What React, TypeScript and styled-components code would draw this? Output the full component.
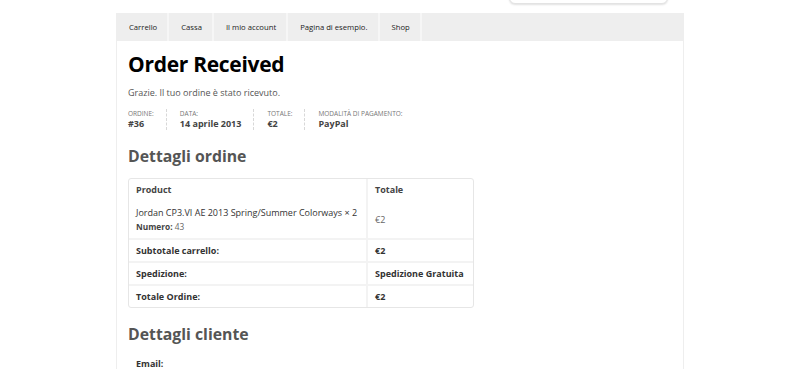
import React from 'react';
import styled, { createGlobalStyle } from 'styled-components';

const GlobalStyle = createGlobalStyle`
  html, body {
    margin: 0;
    padding: 0;
    background: #fff;
    font-family: "Open Sans", "Liberation Sans", sans-serif;
    color: #333;
  }
`

const Page = styled.div`
  width: 800px;
  height: 369px;
  overflow: hidden;
  background: #fff;
`

const TopBar = styled.div`
  height: 13px;
  display: flex;
  justify-content: flex-end;
  padding-right: 132px;
`

const Search = styled.div`
  width: 157px;
  height: 28px;
  margin-top: -26px;
  border: 1px solid #e3e3e3;
  border-radius: 6px;
  box-shadow: 0 1px 2px rgba(0, 0, 0, 0.12);
  background: #fff;
`

const Container = styled.div`
  width: 566px;
  margin-left: 116px;
  border-left: 1px solid #eee;
  border-right: 1px solid #eee;
  min-height: 400px;
`

const Nav = styled.ul`
  display: flex;
  list-style: none;
  margin: 0;
  padding: 0;
  height: 28px;
  background: #eee;
`

const NavItem = styled.li`
  display: flex;
  align-items: center;
  padding: 0 10px 0 12px;
  font-size: 7.7px;
  color: #222;
  border-right: 2px solid #f6f6f6;
`

const Content = styled.div`
  padding: 8px 11px 0 11px;
`

const Title = styled.h1`
  margin: 0;
  font-size: 21px;
  font-weight: 700;
  color: #000;
  letter-spacing: -0.3px;
  line-height: 30px;
`

const Thanks = styled.p`
  margin: 8px 0 0;
  font-size: 9px;
  line-height: 12px;
  color: #555;
`

const Overview = styled.ul`
  display: flex;
  list-style: none;
  margin: 10px 0 0;
  padding: 0;
`

const OverviewItem = styled.li`
  display: flex;
  flex-direction: column;
  padding-right: 12px;
  margin-right: 13px;
  border-right: 1px dashed #d8d8d8;

  &:last-child {
    border-right: none;
  }

  .label {
    font-size: 6.5px;
    text-transform: uppercase;
    color: #777;
    line-height: 9px;
  }

  .value {
    font-size: 9px;
    font-weight: 700;
    color: #444;
    line-height: 12px;
  }
`

const SectionTitle = styled.h2<{ top: number }>`
  margin: ${(p) => p.top}px 0 0;
  font-size: 15.8px;
  font-weight: 700;
  color: #555;
  line-height: 22px;
`

const Table = styled.table`
  margin-top: 11px;
  width: 346px;
  border-collapse: separate;
  border-spacing: 0;
  border: 1px solid #e6e6e6;
  border-radius: 3px;
  font-size: 9px;
  color: #333;
`

const Cell = styled.td<{ head?: boolean; bold?: boolean; wide?: boolean }>`
  padding: 0 7px;
  height: ${(p) => (p.wide ? '38px' : '21px')};
  font-weight: ${(p) => (p.bold ? 700 : 400)};
  color: ${(p) => (p.head ? '#444' : '#333')};
  text-align: left;
  border-bottom: 2px solid #f3f3f3;
  vertical-align: middle;
  white-space: nowrap;

  &:first-child {
    width: 223px;
    border-right: 2px solid #f3f3f3;
  }

  tr:last-child & {
    border-bottom: none;
  }

  .meta {
    display: block;
    font-size: 8.3px;
    color: #666;
    margin-top: 2px;
  }

  .meta b {
    font-weight: 700;
    color: #444;
  }
`

const Price = styled.span`
  color: #666;
`

const Customer = styled.dl`
  margin: 13px 0 0;
  padding-left: 8px;
  font-size: 9px;
  line-height: 12px;
  font-weight: 700;
  color: #333;
`

const navLinks = ['Carrello', 'Cassa', 'Il mio account', 'Pagina di esempio.', 'Shop']

const overview = [
  { label: 'Ordine:', value: '#36' },
  { label: 'Data:', value: '14 aprile 2013' },
  { label: 'Totale:', value: '€2' },
  { label: 'Modalità di pagamento:', value: 'PayPal' },
]

const totals = [
  { label: 'Subtotale carrello:', value: '€2' },
  { label: 'Spedizione:', value: 'Spedizione Gratuita' },
  { label: 'Totale Ordine:', value: '€2' },
]

const App: React.FunctionComponent = () => (
  <Page>
    <GlobalStyle />
    <TopBar>
      <Search />
    </TopBar>
    <Container>
      <Nav>
        {navLinks.map((link) => (
          <NavItem key={link}>{link}</NavItem>
        ))}
      </Nav>
      <Content>
        <Title>Order Received</Title>
        <Thanks>Grazie. Il tuo ordine è stato ricevuto.</Thanks>
        <Overview>
          {overview.map((item) => (
            <OverviewItem key={item.label}>
              <span className="label">{item.label}</span>
              <span className="value">{item.value}</span>
            </OverviewItem>
          ))}
        </Overview>
        <SectionTitle top={15}>Dettagli ordine</SectionTitle>
        <Table>
          <thead>
            <tr>
              <Cell as="th" head bold>Product</Cell>
              <Cell as="th" head bold>Totale</Cell>
            </tr>
          </thead>
          <tbody>
            <tr>
              <Cell wide>
                Jordan CP3.VI AE 2013 Spring/Summer Colorways × 2
                <span className="meta"><b>Numero:</b> 43</span>
              </Cell>
              <Cell wide><Price>€2</Price></Cell>
            </tr>
            {totals.map((row) => (
              <tr key={row.label}>
                <Cell bold>{row.label}</Cell>
                <Cell bold>{row.value}</Cell>
              </tr>
            ))}
          </tbody>
        </Table>
        <SectionTitle top={15}>Dettagli cliente</SectionTitle>
        <Customer>
          <dt>Email:</dt>
        </Customer>
      </Content>
    </Container>
  </Page>
)

export default App;
